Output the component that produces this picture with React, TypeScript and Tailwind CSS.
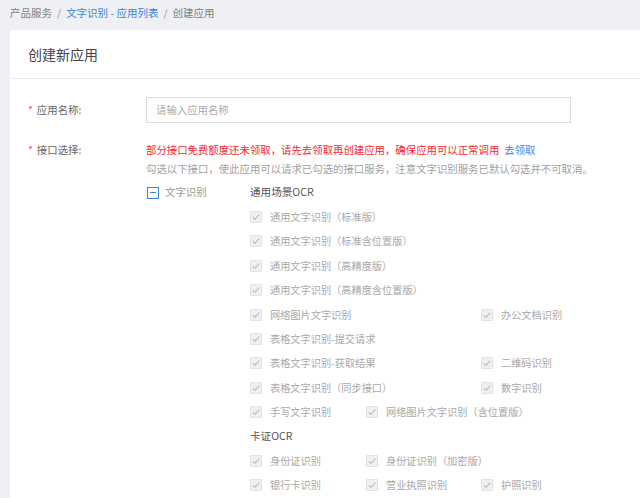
import React from "react";

type Item = { col: 1 | 2 | 3; label: string };
type Row = { type: "title"; label: string } | { type: "items"; items: Item[] };

const rows: Row[] = [
  { type: "items", items: [{ col: 1, label: "通用文字识别（标准版）" }] },
  { type: "items", items: [{ col: 1, label: "通用文字识别（标准含位置版）" }] },
  { type: "items", items: [{ col: 1, label: "通用文字识别（高精度版）" }] },
  { type: "items", items: [{ col: 1, label: "通用文字识别（高精度含位置版）" }] },
  {
    type: "items",
    items: [
      { col: 1, label: "网络图片文字识别" },
      { col: 3, label: "办公文档识别" },
    ],
  },
  { type: "items", items: [{ col: 1, label: "表格文字识别-提交请求" }] },
  {
    type: "items",
    items: [
      { col: 1, label: "表格文字识别-获取结果" },
      { col: 3, label: "二维码识别" },
    ],
  },
  {
    type: "items",
    items: [
      { col: 1, label: "表格文字识别（同步接口）" },
      { col: 3, label: "数字识别" },
    ],
  },
  {
    type: "items",
    items: [
      { col: 1, label: "手写文字识别" },
      { col: 2, label: "网络图片文字识别（含位置版）" },
    ],
  },
  { type: "title", label: "卡证OCR" },
  {
    type: "items",
    items: [
      { col: 1, label: "身份证识别" },
      { col: 2, label: "身份证识别（加密版）" },
    ],
  },
  {
    type: "items",
    items: [
      { col: 1, label: "银行卡识别" },
      { col: 2, label: "营业执照识别" },
      { col: 3, label: "护照识别" },
    ],
  },
];

function DisabledCheck() {
  return (
    <span className="flex h-[12px] w-[12px] shrink-0 items-center justify-center rounded-[1px] border border-[#e2e2e2] bg-[#f0f0f0]">
      <svg width="10" height="10" viewBox="0 0 10 10">
        <polyline
          points="1.8,5.2 4,7.3 8.3,2.6"
          fill="none"
          stroke="#c4c4c4"
          strokeWidth="1.4"
        />
      </svg>
    </span>
  );
}

function CheckItem({ item }: { item: Item }) {
  const colClass =
    item.col === 1 ? "col-start-1" : item.col === 2 ? "col-start-2" : "col-start-3";
  return (
    <div className={`${colClass} row-start-1 flex items-center gap-[8px] whitespace-nowrap`}>
      <DisabledCheck />
      <span className="text-[10.2px] text-[#a8a8a8]">{item.label}</span>
    </div>
  );
}

export default function App() {
  return (
    <div
      className="h-[498px] w-[640px] overflow-hidden bg-[#eef0f3] leading-none"
      style={{ fontFamily: '"Noto Sans CJK SC", "Noto Sans", sans-serif' }}
    >
      {/* breadcrumb */}
      <div className="flex h-[30px] items-center pb-[4px] pl-[10px] text-[10.5px] text-[#808080]">
        <span>产品服务</span>
        <span className="mx-[5px] text-[#999]">/</span>
        <span className="text-[#3b86dc]">文字识别 - 应用列表</span>
        <span className="mx-[5px] text-[#999]">/</span>
        <span>创建应用</span>
      </div>

      {/* card */}
      <div className="ml-[10px] h-[468px] bg-white">
        <div className="flex h-[49px] items-center border-b border-[#ebebeb] pl-[18px] text-[14px] text-[#444]">
          创建新应用
        </div>

        <div className="pl-[18px] pt-[18px] text-[10.4px]">
          {/* app name */}
          <div className="flex items-center">
            <div className="flex w-[118px] items-center text-[#666]">
              <span className="mr-[4px] text-[#e8494b]">*</span>
              <span>应用名称:</span>
            </div>
            <div className="flex h-[26px] w-[425px] items-center border border-[#dcdcdc] pl-[9px] text-[#aaa]">
              请输入应用名称
            </div>
          </div>

          {/* interface selection */}
          <div className="mt-[18px] flex">
            <div className="flex h-[19px] w-[118px] items-center text-[#666]">
              <span className="mr-[4px] text-[#e8494b]">*</span>
              <span>接口选择:</span>
            </div>
            <div className="flex flex-col">
              <div className="flex h-[19px] items-center whitespace-nowrap">
                <span className="text-[#f02a2f]">
                  部分接口免费额度还未领取，请先去领取再创建应用，确保应用可以正常调用
                </span>
                <span className="ml-[5px] text-[#3b86dc]">去领取</span>
              </div>
              <div className="flex h-[19px] items-center whitespace-nowrap text-[#a0a0a0]">
                勾选以下接口，使此应用可以请求已勾选的接口服务，注意文字识别服务已默认勾选并不可取消。
              </div>

              <div className="mt-[1.5px] flex">
                <div className="flex h-[24.4px] w-[104px] items-center">
                  <span className="ml-[1px] flex h-[12px] w-[12px] items-center justify-center border border-[#3b86dc] bg-white">
                    <span className="h-[1.5px] w-[6px] bg-[#3b86dc]" />
                  </span>
                  <span className="ml-[6px] text-[#999]">文字识别</span>
                </div>
                <div className="flex flex-col">
                  <div className="flex h-[24.4px] items-center text-[10.6px] text-[#555]">
                    通用场景OCR
                  </div>
                  {rows.map((row, i) =>
                    row.type === "title" ? (
                      <div
                        key={i}
                        className="flex h-[24.4px] items-center text-[10.6px] text-[#555]"
                      >
                        {row.label}
                      </div>
                    ) : (
                      <div
                        key={i}
                        className="grid h-[24.4px] grid-cols-[116px_115px_120px] items-center"
                      >
                        {row.items.map((it, j) => (
                          <CheckItem key={j} item={it} />
                        ))}
                      </div>
                    )
                  )}
                </div>
              </div>
            </div>
          </div>
        </div>
      </div>
    </div>
  );
}
